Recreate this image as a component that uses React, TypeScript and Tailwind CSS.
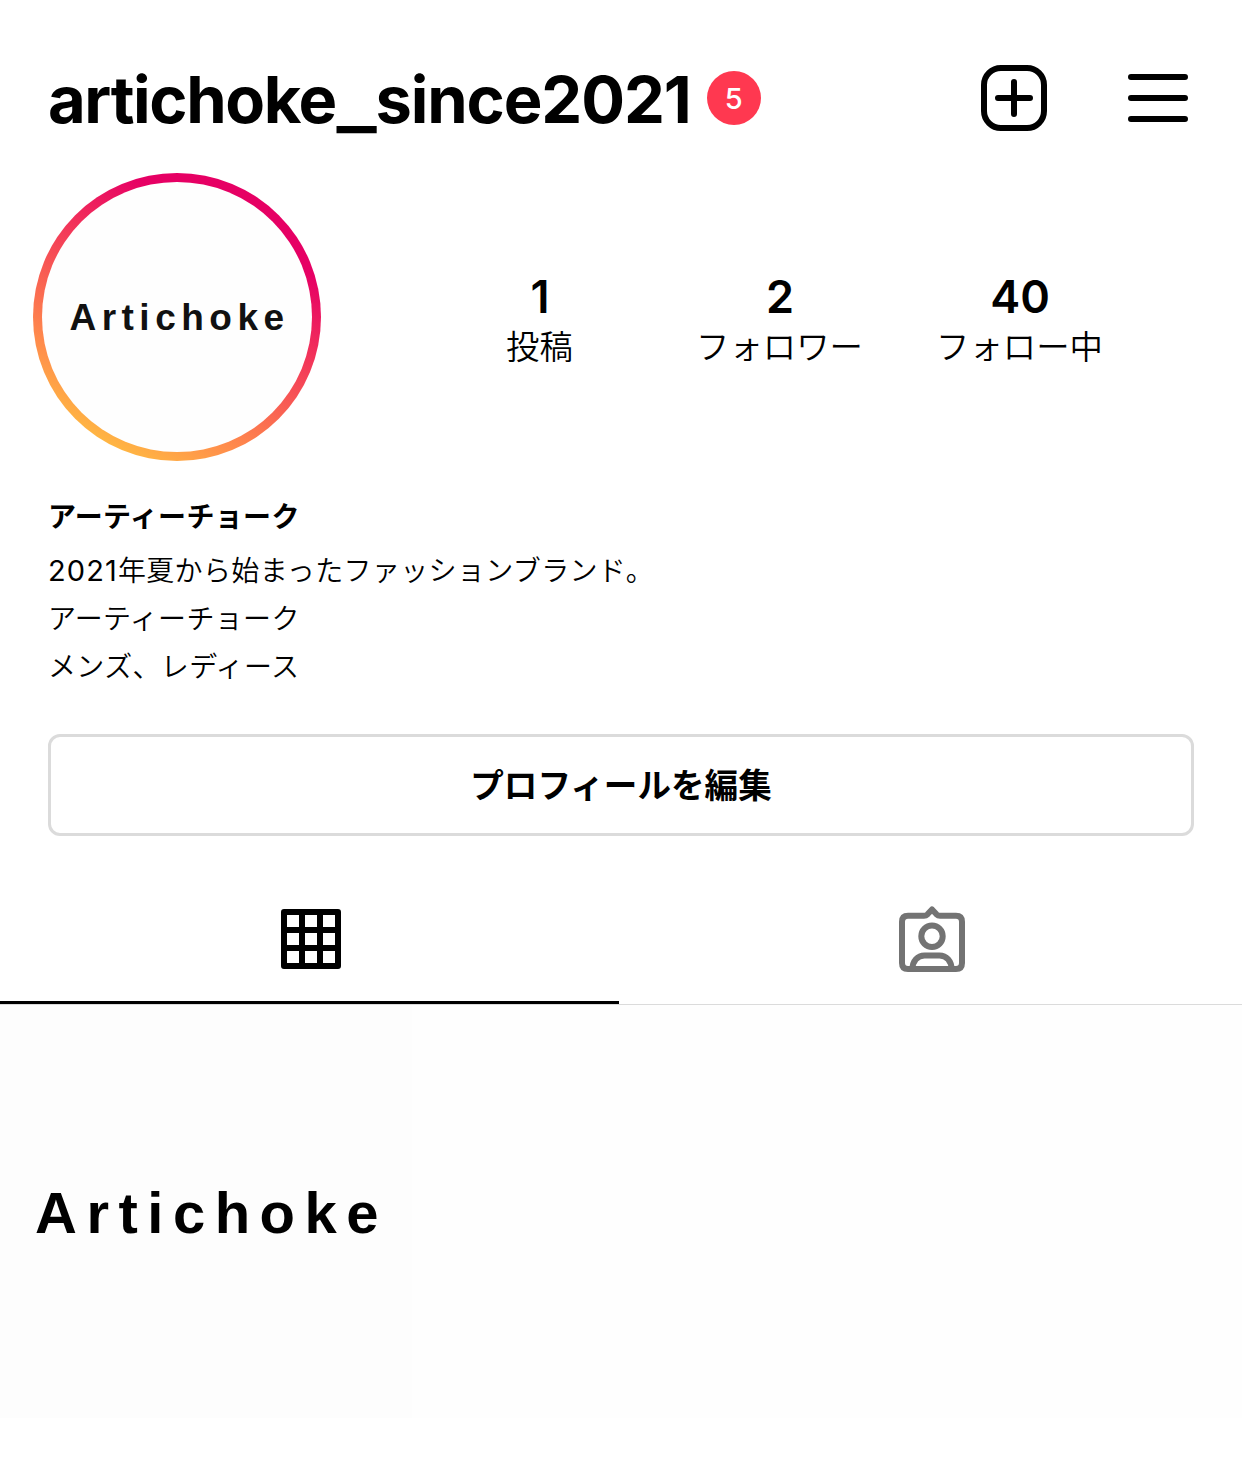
import { useState } from "react";

const STATS = [
  { value: "1", label: "投稿" },
  { value: "2", label: "フォロワー" },
  { value: "40", label: "フォロー中" },
];

function NewPostIcon() {
  return (
    <svg width="66" height="66" viewBox="0 0 66 66" fill="none" stroke="currentColor" strokeWidth="6" strokeLinecap="round">
      <rect x="3" y="3" width="60" height="60" rx="17" />
      <path d="M33 17v32M17 33h32" />
    </svg>
  );
}

function MenuIcon() {
  return (
    <svg width="60" height="48" viewBox="0 0 60 48" fill="none" stroke="currentColor" strokeWidth="6" strokeLinecap="round">
      <path d="M3 3h54M3 24h54M3 45h54" />
    </svg>
  );
}

function GridIcon() {
  return (
    <svg width="60" height="60" viewBox="0 0 60 60" fill="none" stroke="currentColor" strokeWidth="6">
      <rect x="3" y="3" width="54" height="54" strokeLinejoin="round" />
      <path d="M21 3v54M39 3v54M3 21h54M3 39h54" />
    </svg>
  );
}

function TaggedIcon() {
  return (
    <svg width="66" height="66" viewBox="0 0 66 66" fill="none" stroke="currentColor" strokeWidth="6" strokeLinejoin="round">
      <path d="M9 9.800h16q2 0 3.500-1.500L33 3.500l4.500 4.800Q39 9.800 41 9.800h16q6 0 6 6V57q0 6-6 6H9q-6 0-6-6V15.800q0-6 6-6z" />
      <circle cx="33" cy="30.300" r="10.700" />
      <path d="M13.500 63c0-8 5-13.500 12-13.500h15c7 0 12 5.500 12 13.500" />
    </svg>
  );
}

function Avatar() {
  return (
    <div className="w-72 h-72 shrink-0 rounded-full p-[9px] bg-linear-[29deg,#ffb643_13%,#ff8a4c_28%,#f2325a_58%,#e60064_76%]">
      <div className="w-full h-full rounded-full bg-[#fefefe] flex items-center justify-center">
        <span className="pl-[5px] font-['Liberation_Sans',sans-serif] font-bold text-[37px] leading-none tracking-[5.500px] text-[#111]">
          Artichoke
        </span>
      </div>
    </div>
  );
}

export default function App() {
  const [tab, setTab] = useState<"grid" | "tagged">("grid");

  return (
    <div className="w-[1242px] h-[1470px] overflow-hidden bg-white text-black font-['Inter','Noto_Sans_CJK_JP',sans-serif]">
      <header className="h-[148px] pt-12 pl-12 pr-[54px] flex items-center">
        <h1 className="pt-[2px] text-[65px] leading-none font-bold tracking-[-1.400px] whitespace-nowrap">
          artichoke
          <span className="inline-block mx-[5px] translate-y-[3px] scale-x-130">_</span>
          <span className="tracking-[-1.100px]">since2021</span>
        </h1>
        <span className="ml-4 w-[54px] h-[54px] rounded-full bg-[#ff3850] text-white text-[29px] font-medium leading-none flex items-center justify-center">
          5
        </span>
        <div className="ml-auto flex items-center gap-[81px]">
          <button type="button" aria-label="new post">
            <NewPostIcon />
          </button>
          <button type="button" aria-label="menu">
            <MenuIcon />
          </button>
        </div>
      </header>

      <section className="mt-[25px] pl-[33px] flex items-start">
        <Avatar />
        <div className="ml-[99px] mt-[99px] flex">
          {STATS.map((s) => (
            <div key={s.label} className="w-60 flex flex-col items-center">
              <span className="text-[45px] leading-[50px] font-semibold">{s.value}</span>
              <span className="pr-px text-[33.400px] leading-[50px] font-[350] whitespace-nowrap">{s.label}</span>
            </div>
          ))}
        </div>
      </section>

      <section className="mt-8 px-12 text-[28px] leading-[48px] tracking-[0.350px]">
        <h2 className="font-bold">アーティーチョーク</h2>
        <div className="mt-[6px] font-[350]">
          <p>
            <span className="text-[29px] font-normal tracking-[1.100px]">2021</span>年夏から始まったファッションブランド。
          </p>
          <p>アーティーチョーク</p>
          <p>メンズ、レディース</p>
        </div>
      </section>

      <div className="mt-[43px] px-12">
        <button
          type="button"
          className="w-full h-[102px] pt-[2px] rounded-xl border-[3px] border-[#dbdbdb] text-[33.600px] font-bold leading-none"
        >
          プロフィールを編集
        </button>
      </div>

      <nav className="h-[169px] pt-[37px] flex border-b border-[#dbdbdb]">
        <button
          type="button"
          onClick={() => setTab("grid")}
          className={`w-[619px] pl-[3px] pt-1 flex items-center justify-center border-b-[3px] ${tab === "grid" ? "border-black text-black" : "border-transparent text-[#737373]"}`}
        >
          <GridIcon />
        </button>
        <button
          type="button"
          onClick={() => setTab("tagged")}
          className={`flex-1 pl-[3px] pt-1 flex items-center justify-center border-b-[3px] ${tab === "tagged" ? "border-black text-black" : "border-transparent text-[#737373]"}`}
        >
          <TaggedIcon />
        </button>
      </nav>

      <main className="grid grid-cols-3 gap-[3px] bg-[#fefefe]">
        <div className="h-[413px] pl-[35px] pt-[178px] bg-[#fdfdfd]">
          <span className="block font-['Liberation_Sans',sans-serif] font-bold text-[58px] leading-[60px] tracking-[9.500px]">
            Artichoke
          </span>
        </div>
      </main>
    </div>
  );
}
